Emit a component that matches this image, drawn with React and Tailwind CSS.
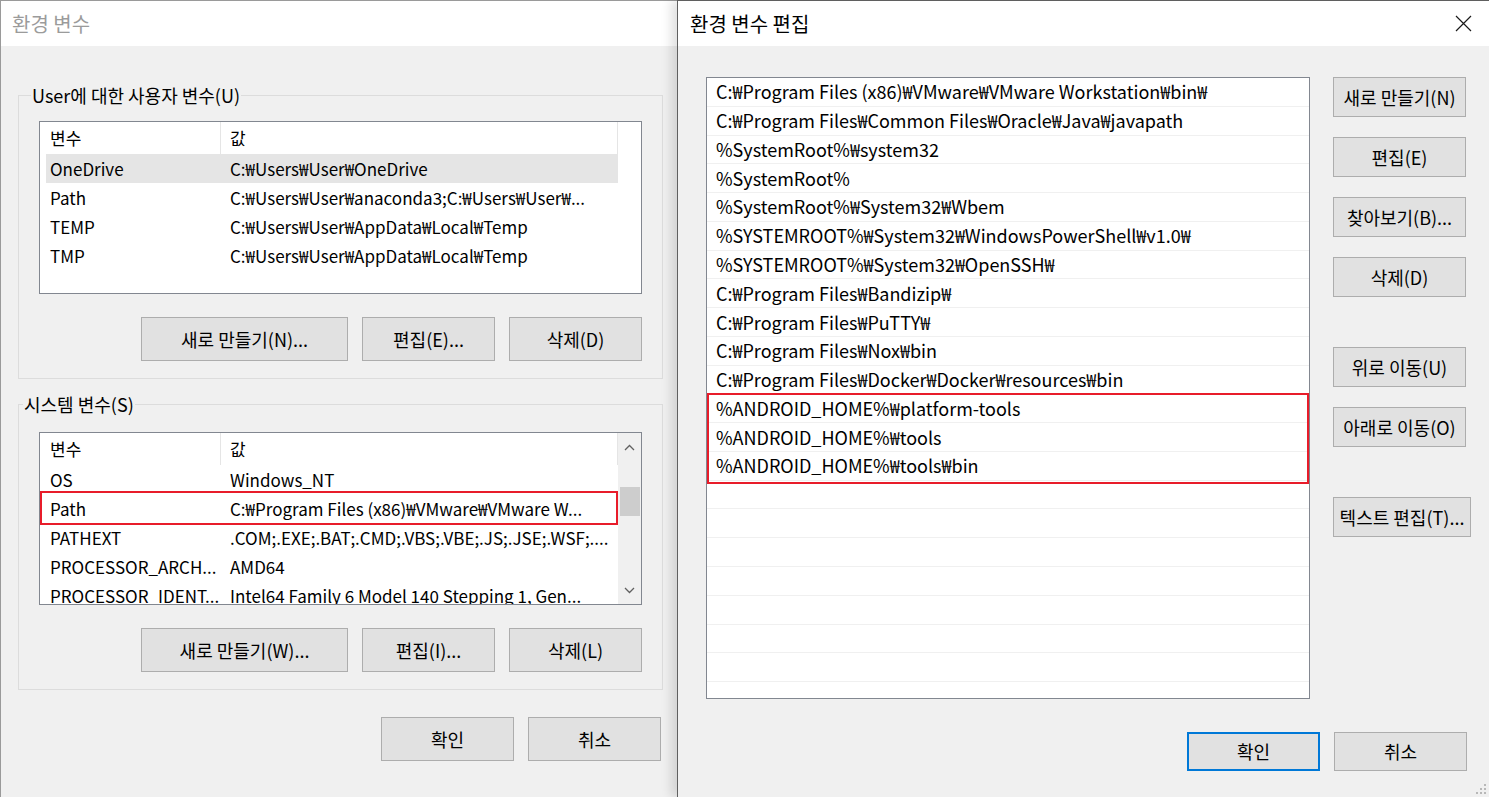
import React from 'react';

const userVars = [
    { name: 'OneDrive', value: 'C:₩Users₩User₩OneDrive', selected: true },
    { name: 'Path', value: 'C:₩Users₩User₩anaconda3;C:₩Users₩User₩...' },
    { name: 'TEMP', value: 'C:₩Users₩User₩AppData₩Local₩Temp' },
    { name: 'TMP', value: 'C:₩Users₩User₩AppData₩Local₩Temp' },
];

const systemVars = [
    { name: 'OS', value: 'Windows_NT' },
    { name: 'Path', value: 'C:₩Program Files (x86)₩VMware₩VMware W...', marked: true },
    { name: 'PATHEXT', value: '.COM;.EXE;.BAT;.CMD;.VBS;.VBE;.JS;.JSE;.WSF;....' },
    { name: 'PROCESSOR_ARCH...', value: 'AMD64' },
    { name: 'PROCESSOR_IDENT...', value: 'Intel64 Family 6 Model 140 Stepping 1, Gen...' },
];

const pathEntries = [
    'C:₩Program Files (x86)₩VMware₩VMware Workstation₩bin₩',
    'C:₩Program Files₩Common Files₩Oracle₩Java₩javapath',
    '%SystemRoot%₩system32',
    '%SystemRoot%',
    '%SystemRoot%₩System32₩Wbem',
    '%SYSTEMROOT%₩System32₩WindowsPowerShell₩v1.0₩',
    '%SYSTEMROOT%₩System32₩OpenSSH₩',
    'C:₩Program Files₩Bandizip₩',
    'C:₩Program Files₩PuTTY₩',
    'C:₩Program Files₩Nox₩bin',
    'C:₩Program Files₩Docker₩Docker₩resources₩bin',
];

const androidEntries = [
    '%ANDROID_HOME%₩platform-tools',
    '%ANDROID_HOME%₩tools',
    '%ANDROID_HOME%₩tools₩bin',
];

function Btn({ children, className = '', primary = false }) {
    return (
        <button
            className={`flex items-center justify-center bg-[#e1e1e1] text-black text-[18px] whitespace-nowrap ${primary ? 'border-2 border-[#0078d7]' : 'border border-[#adadad]'} ${className}`}
        >
            {children}
        </button>
    );
}

function Chevron({ down = false }) {
    return (
        <svg width="11" height="7" viewBox="0 0 11 7" className={down ? 'rotate-180' : ''}>
            <polyline points="1,6 5.5,1.5 10,6" fill="none" stroke="#606060" strokeWidth="1.3" />
        </svg>
    );
}

function VarList({ rows, scrollbar = false }) {
    return (
        <div className="h-[173px] bg-white border border-[#828790] flex overflow-hidden text-[17px]">
            <div className="w-[578px] pl-[6px] flex flex-col">
                <div className="h-[32px] flex shrink-0">
                    <div className="w-[175px] pl-[4px] flex items-center border-r border-[#e5e5e5]">변수</div>
                    <div className="flex-1 pl-[9px] flex items-center border-r border-[#e5e5e5]">값</div>
                </div>
                {rows.map((r, i) => (
                    <div
                        key={i}
                        className={`relative h-[29px] shrink-0 flex items-center whitespace-nowrap ${r.selected ? 'bg-[#e5e5e5]' : ''}`}
                    >
                        <div className="w-[175px] pl-[4px] overflow-hidden">{r.name}</div>
                        <div className="flex-1 pl-[9px] overflow-hidden">{r.value}</div>
                        {r.marked && (
                            <span className="absolute -top-[3px] -bottom-[2px] -left-[6px] right-0 border-2 border-[#e81c2a]"></span>
                        )}
                    </div>
                ))}
            </div>
            {scrollbar && (
                <div className="flex-1 bg-[#f0f0f0] flex flex-col items-center pt-[11px] pb-[10px]">
                    <Chevron />
                    <div className="w-[20px] h-[29px] bg-[#cdcdcd] mt-[36px]"></div>
                    <div className="flex-1"></div>
                    <Chevron down />
                </div>
            )}
        </div>
    );
}

function Group({ label, labelIndent, className = '', children }) {
    return (
        <div className={`w-[645px] border border-[#dcdcdc] px-[20px] pb-[17px] ${className}`}>
            <div className={`-mt-[13px] w-fit px-[1px] bg-[#f0f0f0] leading-[24px] ${labelIndent}`}>{label}</div>
            {children}
        </div>
    );
}

function EnvDialog() {
    return (
        <div className="w-[677px] h-full shrink-0 flex flex-col bg-[#f0f0f0] border-l border-t border-[#9a9a9a]">
            <div className="h-[45px] shrink-0 bg-white flex items-center pl-[11px] text-[20px] text-[#9b9b9b]">환경 변수</div>
            <div className="pl-[17px] flex flex-col">
                <Group label="User에 대한 사용자 변수(U)" labelIndent="-ml-[8px]" className="mt-[49px]">
                    <div className="mt-[14px]">
                        <VarList rows={userVars} />
                    </div>
                    <div className="flex justify-end gap-[14px] mt-[23px]">
                        <Btn className="w-[207px] h-[44px]">새로 만들기(N)...</Btn>
                        <Btn className="w-[133px] h-[44px]">편집(E)...</Btn>
                        <Btn className="w-[133px] h-[44px]">삭제(D)</Btn>
                    </div>
                </Group>
                <Group label="시스템 변수(S)" labelIndent="-ml-[16px]" className="mt-[25px]">
                    <div className="mt-[16px]">
                        <VarList rows={systemVars} scrollbar />
                    </div>
                    <div className="flex justify-end gap-[14px] mt-[23px]">
                        <Btn className="w-[207px] h-[44px]">새로 만들기(W)...</Btn>
                        <Btn className="w-[133px] h-[44px]">편집(I)...</Btn>
                        <Btn className="w-[133px] h-[44px]">삭제(L)</Btn>
                    </div>
                </Group>
                <div className="w-[645px] flex justify-end gap-[14px] mt-[27px] pr-[2px]">
                    <Btn className="w-[133px] h-[44px]">확인</Btn>
                    <Btn className="w-[133px] h-[44px]">취소</Btn>
                </div>
            </div>
        </div>
    );
}

function PathRow({ text }) {
    return (
        <div className="h-[28.77px] shrink-0 flex items-center pl-[9px] border-b border-[#f0f0f0] whitespace-nowrap">
            {text}
        </div>
    );
}

function EditDialog() {
    const empty = Array.from({ length: 9 });
    return (
        <div className="relative z-10 flex-1 h-full flex flex-col bg-[#f0f0f0] border-l border-t border-[#5f5f5f] shadow-[-6px_0_10px_rgba(0,0,0,0.12)]">
            <div className="h-[45px] shrink-0 bg-white flex items-center justify-between pl-[12px] pr-[17px]">
                <span className="text-[20px] text-black">환경 변수 편집</span>
                <svg width="17" height="17" viewBox="0 0 17 17">
                    <path d="M1 1 L16 16 M16 1 L1 16" stroke="#1a1a1a" strokeWidth="1.2" fill="none" />
                </svg>
            </div>
            <div className="flex pl-[28px] mt-[31px]">
                <div className="w-[604px] h-[622px] bg-white border border-[#828790] flex flex-col overflow-hidden">
                    {pathEntries.map((p, i) => (
                        <PathRow key={i} text={p} />
                    ))}
                    <div className="relative flex flex-col shrink-0">
                        {androidEntries.map((p, i) => (
                            <PathRow key={i} text={p} />
                        ))}
                        <span className="absolute -top-[1px] -bottom-[3px] left-0 right-0 border-2 border-[#e81c2a]"></span>
                    </div>
                    {empty.map((_, i) => (
                        <PathRow key={i} text="" />
                    ))}
                </div>
                <div className="flex flex-col ml-[23px]">
                    <Btn className="w-[133px] h-[40px]">새로 만들기(N)</Btn>
                    <Btn className="w-[133px] h-[40px] mt-[20px]">편집(E)</Btn>
                    <Btn className="w-[133px] h-[40px] mt-[20px]">찾아보기(B)...</Btn>
                    <Btn className="w-[133px] h-[40px] mt-[20px]">삭제(D)</Btn>
                    <Btn className="w-[133px] h-[40px] mt-[50px]">위로 이동(U)</Btn>
                    <Btn className="w-[133px] h-[40px] mt-[20px]">아래로 이동(O)</Btn>
                    <Btn className="w-[138px] h-[40px] mt-[50px]">텍스트 편집(T)...</Btn>
                </div>
            </div>
            <div className="flex justify-end gap-[14px] pr-[22px] mt-[33px]">
                <Btn primary className="w-[133px] h-[39px]">확인</Btn>
                <Btn className="w-[133px] h-[39px]">취소</Btn>
            </div>
            <svg className="absolute right-[2px] bottom-[2px]" width="12" height="12" viewBox="0 0 12 12">
                <rect x="9" y="1" width="2" height="2" fill="#b8b8b8" />
                <rect x="5" y="5" width="2" height="2" fill="#b8b8b8" />
                <rect x="9" y="5" width="2" height="2" fill="#b8b8b8" />
                <rect x="1" y="9" width="2" height="2" fill="#b8b8b8" />
                <rect x="5" y="9" width="2" height="2" fill="#b8b8b8" />
                <rect x="9" y="9" width="2" height="2" fill="#b8b8b8" />
            </svg>
        </div>
    );
}

export default function App() {
    return (
        <div className="w-[1489px] h-[797px] flex overflow-hidden bg-[#f0f0f0] text-black text-[18px] font-['Noto_Sans_CJK_KR','Noto_Sans',sans-serif]">
            <EnvDialog />
            <EditDialog />
        </div>
    );
}
